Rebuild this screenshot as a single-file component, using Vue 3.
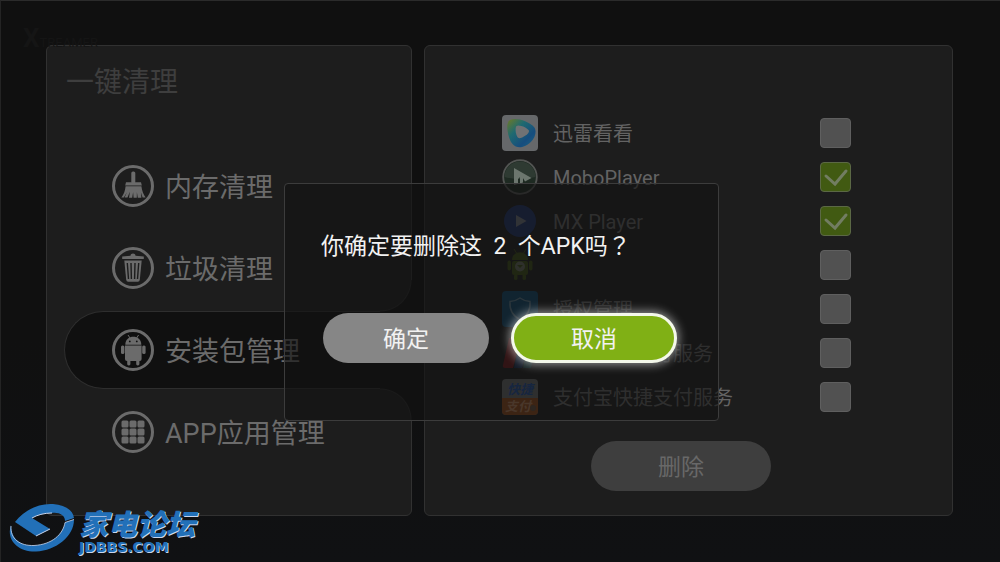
<script setup>
import { ref } from 'vue'

const menu = [
  { label: '内存清理', icon: 'broom' },
  { label: '垃圾清理', icon: 'trash' },
  { label: '安装包管理', icon: 'robot' },
  { label: 'APP应用管理', icon: 'grid' },
]
const current = ref(2)

const packages = ref([
  { name: '迅雷看看', icon: 'kankan', checked: false },
  { name: 'MoboPlayer', icon: 'mobo', checked: true },
  { name: 'MX Player', icon: 'mx', checked: true },
  { name: '', icon: 'android', checked: false },
  { name: '授权管理', icon: 'shield', checked: false },
  { name: '银联安全支付服务', icon: 'union', checked: false },
  { name: '支付宝快捷支付服务', icon: 'alipay', checked: false },
])
const cells = [9.5, 17.5, 25.5]
</script>

<template>
  <div class="screen">
    <main class="panels">
      <section class="panel side">
        <h1 class="title">一键清理</h1>
        <nav class="menu">
          <button
            v-for="(item, i) in menu"
            :key="item.label"
            type="button"
            class="menu-item"
            :class="{ active: i === current }"
            @click="current = i"
          >
            <svg class="menu-icon" viewBox="0 0 42 42" aria-hidden="true">
              <circle cx="21" cy="21" r="19.5" fill="none" stroke="currentColor" stroke-width="3" />
              <g v-if="item.icon === 'broom'" fill="currentColor">
                <rect x="19.3" y="6.5" width="4" height="12" rx="1.6" />
                <path d="M14 17.2h15l.8 3.2H13.2z" />
                <path d="M13.6 21.2h15.8c.6 4.6 2 8 4.2 11.4h-3l-1.7-5 .5 5.200h-3.600l-.9-5.500-.1 5.500h-3.200l-.5-5.500-.9 5.500H17l.9-6-2.400 5.800H12.600l2.200-5-3 4.900H9.400c2.400-3.200 3.700-6.700 4.200-11.300z" />
              </g>
              <g v-else-if="item.icon === 'trash'">
                <path d="M18.500 8.800c0-3 5-3 5 0l8.300.7v2.600H10.200V9.500z" fill="currentColor" />
                <path d="M12.300 13.500h17.400l-1.900 19.300q-.2 1.900-2 1.900h-9.600q-1.800 0-2-1.900z" fill="currentColor" />
                <path d="M15.300 16l1.200 16M19 16l.4 16M23 16l-.4 16M26.700 16l-1.200 16" fill="none" stroke="#1c1c1c" stroke-width="1.400" />
              </g>
              <g v-else-if="item.icon === 'robot'" fill="currentColor">
                <path d="M13.300 15.700c0-10.600 16-10.600 16 0z" />
                <path d="M16 6l2 3M26.600 6l-2 3" stroke="currentColor" stroke-width="1" />
                <circle cx="17.800" cy="12.400" r=".9" fill="#111" />
                <circle cx="24.800" cy="12.400" r=".9" fill="#111" />
                <path d="M13 16.600h16.600v13.400q0 2-2 2H15q-2 0-2-2z" />
                <rect x="9" y="16.500" width="3.400" height="8.500" rx="1.500" />
                <rect x="30.200" y="16.500" width="3.400" height="8.500" rx="1.500" />
                <rect x="15.200" y="30" width="3.200" height="6.500" rx="1.400" />
                <rect x="24.200" y="30" width="3.200" height="6.500" rx="1.400" />
              </g>
              <g v-else fill="currentColor">
                <template v-for="y in cells" :key="y">
                  <rect v-for="x in cells" :key="x" :x="x" :y="y" width="7" height="7" rx="1.500" />
                </template>
              </g>
            </svg>
            <span class="menu-label">{{ item.label }}</span>
          </button>
        </nav>
      </section>

      <section class="panel content">
        <ul class="list">
          <li v-for="(p, i) in packages" :key="p.icon" class="row">
            <svg class="app-icon" viewBox="0 0 36 36" aria-hidden="true">
              <g v-if="p.icon === 'kankan'">
                <defs>
                  <linearGradient id="kk" x1="0" y1="0" x2="1" y2="1">
                    <stop offset="0" stop-color="#6f7a25" />
                    <stop offset=".35" stop-color="#1f6a70" />
                    <stop offset=".7" stop-color="#164d7e" />
                    <stop offset="1" stop-color="#1b6482" />
                  </linearGradient>
                </defs>
                <rect width="36" height="36" rx="4" fill="#66686a" />
                <path d="M8 5C14 2 26 6 32 12c4 5 0 15-9 19-9 4-14-2-16-9C5 15 4 8 8 5z" fill="url(#kk)" />
                <path d="M14.500 11c2-2 12 2 12.500 5s-8 8-10.500 7-4-10-2-12z" fill="#707274" />
              </g>
              <g v-else-if="p.icon === 'mobo'">
                <circle cx="18" cy="18" r="16.800" fill="#1e2a22" stroke="#535553" stroke-width="1.800" />
                <path d="M2.500 18a15.500 15.500 0 0 1 31 0q-15 4-31 0z" fill="#2e3a32" />
                <path d="M12 9v17l4-1V20l2-2v6.500l3-1V19l2 3.500 6.500-3.500z" fill="#6c766e" />
              </g>
              <g v-else-if="p.icon === 'mx'">
                <circle cx="18" cy="18" r="16" fill="#1f3266" />
                <path d="M14 12l10.500 6L14 24z" fill="#6c7079" />
              </g>
              <g v-else-if="p.icon === 'android'" fill="#3a4a14">
                <path d="M10 13c0-10.500 16-10.500 16 0z" />
                <path d="M12 2l2.500 4M24 2l-2.500 4" stroke="#3a4a14" />
                <rect x="10" y="14" width="16" height="14" rx="2" />
                <rect x="5.500" y="13.500" width="3.500" height="10" rx="1.700" />
                <rect x="27" y="13.500" width="3.500" height="10" rx="1.700" />
                <rect x="12" y="27" width="3.500" height="6" rx="1.500" />
                <rect x="20.500" y="27" width="3.500" height="6" rx="1.500" />
                <circle cx="18" cy="19.500" r="5" fill="#62685a" />
                <path d="M15 18h6l-3 3z" fill="#3a4a14" />
              </g>
              <g v-else-if="p.icon === 'shield'">
                <rect width="36" height="36" rx="4" fill="#0f4567" />
                <path d="M18 7q5 3.500 10 3.500Q29 23 18 28.500 7 23 8 10.500 13 10.500 18 7z" fill="none" stroke="#587686" stroke-width="1.500" />
              </g>
              <g v-else-if="p.icon === 'union'">
                <path d="M7 3h12l-8 30H3q-3 0-2-3z" fill="#6b171c" />
                <path d="M18 3h10l-8 30H12z" fill="#142a4a" />
                <path d="M27 3h9l-7 30h-8z" fill="#12373a" />
              </g>
              <g v-else>
                <rect width="36" height="36" rx="4" fill="#626466" />
                <path d="M0 19h36v13q0 4-4 4H4q-4 0-4-4z" fill="#8a4519" />
                <text x="18" y="15" class="ico-text" fill="#1d4a94">快捷</text>
                <text x="16" y="32" class="ico-text" fill="#b07b58">支付</text>
                <circle cx="31" cy="29" r="3" fill="#5e4a3a" />
              </g>
            </svg>
            <label class="name" :for="'pkg-' + i">{{ p.name }}</label>
            <span class="tick">
              <input :id="'pkg-' + i" v-model="p.checked" type="checkbox" />
              <svg v-if="p.checked" viewBox="0 0 31 30" aria-hidden="true">
                <path d="M6 14l9 8L26 9" fill="none" stroke="#727d62" stroke-width="3" stroke-linecap="round" />
              </svg>
            </span>
          </li>
        </ul>
        <button type="button" class="pill remove">删除</button>
      </section>
    </main>

    <div class="ghost" aria-hidden="true"><b>X</b>TREAMER</div>

    <div class="overlay">
      <div class="dialog" role="dialog" aria-modal="true" aria-labelledby="ask">
        <p id="ask" class="question">你确定要删除这&nbsp; 2&nbsp; 个APK吗<span class="mark">？</span></p>
        <div class="actions">
          <button type="button" class="pill ok">确定</button>
          <button type="button" class="pill cancel">取消</button>
        </div>
      </div>
    </div>

    <div class="brand">
      <svg class="brand-mark" viewBox="0 0 66 50" aria-hidden="true">
        <path d="M2 22C-3 36 8 49 27 48.500c20-1 38-15 38-32l-9 3c-2 12-13 22-31 23C11 43 2 36 2 22z" fill="#2270b8" />
        <path d="M2 23C1 36 11 43 25 42.500c18-1 29-11 31-23l9-3" fill="none" stroke="#c9d6ee" stroke-width=".8" />
        <path d="M6 19C15 7 30 0 44 1c12 1 20 6 21 14l-9 3c0-6-6-9-13-8-8 0-15 2-20 5l18 11-14 7z" fill="#2270b8" />
        <path d="M43 10c-8 0-15 2-20 5M41 26l-14 7" fill="none" stroke="#c9d6ee" stroke-width="1" />
      </svg>
      <div class="brand-text">
        <span class="brand-cn">家电论坛</span>
        <span class="brand-en">JDBBS.COM</span>
      </div>
    </div>
  </div>
</template>

<style>
body {
  margin: 0;
  background: #101010;
}
</style>

<style scoped>
.screen {
  position: relative;
  box-sizing: border-box;
  min-height: 100vh;
  padding: 44px 47px 45px 45px;
  border-top: 1px solid #2b2b2b;
  border-left: 1px solid #242424;
  background: linear-gradient(#101010 60%, #101113);
  font-family: Roboto, "Noto Sans CJK SC", sans-serif;
  color: #6b6b6b;
}
button {
  margin: 0;
  padding: 0;
  border: 0;
  background: none;
  color: inherit;
  font: inherit;
}
.panels {
  display: grid;
  grid-template-columns: 366fr 529fr;
  gap: 12px;
}
.panel {
  box-sizing: border-box;
  min-width: 0;
  border: 1px solid #313131;
  border-radius: 6px;
  background: #1d1d1d;
}
.title {
  margin: 0;
  padding: 17px 0 0 19px;
  font-size: 28px;
  line-height: 40px;
  font-weight: 400;
  color: #3e3e3e;
}
.menu {
  display: flex;
  flex-direction: column;
  gap: 4px;
  padding: 44px 0 44px 17px;
}
.menu-item {
  position: relative;
  display: flex;
  align-items: center;
  gap: 11px;
  height: 78px;
  padding-left: 48px;
  font-size: 27px;
  white-space: nowrap;
}
.menu-label {
  padding-top: 4px;
  line-height: 32px;
}
.menu-icon {
  width: 42px;
  height: 42px;
  flex: none;
}
.active {
  margin-right: -1px;
  background: #101010;
  border: 1px solid #2e2e2e;
  border-right: 0;
  border-radius: 39px 0 0 39px;
  padding-left: 47px;
}
.active::before,
.active::after {
  content: "";
  position: absolute;
  right: 0;
  width: 32px;
  height: 32px;
}
.active::before {
  bottom: 100%;
  background: radial-gradient(circle at 0 0, transparent 30px, #292929 31px, #101010 32px);
}
.active::after {
  top: 100%;
  background: radial-gradient(circle at 0 100%, transparent 30px, #292929 31px, #101010 32px);
}
.content {
  padding: 65px 101px 24px 77px;
}
.list {
  margin: 0;
  padding: 0;
  list-style: none;
}
.row {
  display: flex;
  align-items: center;
  height: 44px;
}
.app-icon {
  width: 36px;
  height: 36px;
  flex: none;
}
.ico-text {
  font-size: 13px;
  font-weight: 700;
  font-style: italic;
  text-anchor: middle;
}
.name {
  flex: 1;
  margin-left: 15px;
  padding-top: 2px;
  font-size: 20px;
  line-height: 26px;
  white-space: nowrap;
  color: #636363;
}
.tick {
  position: relative;
  width: 31px;
  height: 30px;
}
.tick input {
  appearance: none;
  display: block;
  box-sizing: border-box;
  width: 100%;
  height: 100%;
  margin: 0;
  border: 1px solid #5f5f5f;
  border-radius: 4px;
  background: #515151;
}
.tick input:checked {
  border-color: #5b6845;
  background: #415a12;
}
.tick svg {
  position: absolute;
  inset: 0;
  pointer-events: none;
}
.pill {
  height: 50px;
  padding-top: 4px;
  border-radius: 25px;
  font-size: 23px;
  line-height: 26px;
}
.remove {
  display: block;
  width: 180px;
  margin: 22px 0 0 89px;
  background: #3e3e3e;
  color: #686868;
}
.ghost {
  position: absolute;
  top: 22px;
  left: 22px;
  font-size: 13px;
  color: #151515;
}
.ghost b {
  font-size: 26px;
}
.overlay {
  position: absolute;
  inset: 0;
  display: flex;
  justify-content: center;
  align-items: flex-start;
  padding: 182px 0 0 2px;
}
.dialog {
  box-sizing: border-box;
  width: 435px;
  padding: 45px 41px 57px 38px;
  border: 1px solid #3c3c3c;
  border-radius: 4px;
  background: rgba(18, 18, 18, 0.65);
  color: #f2f2f2;
}
.question {
  margin: 0 0 48px -2px;
  font-size: 23px;
  line-height: 36px;
  white-space: nowrap;
}
.mark {
  font-family: "Noto Sans CJK TC", sans-serif;
  line-height: 1;
}
.actions {
  display: grid;
  grid-template-columns: 1fr 1fr;
  gap: 22px;
}
.ok {
  background: #868686;
}
.cancel {
  border: 3px solid #f4f8ea;
  background: #80b015;
  box-shadow: 0 0 10px 2px rgba(255, 255, 255, 0.5);
}
.brand {
  position: absolute;
  left: 8px;
  bottom: 9px;
  display: flex;
  align-items: flex-end;
  gap: 4px;
  color: #2270b8;
}
.brand-mark {
  width: 66px;
  height: 50px;
}
.brand-text {
  display: flex;
  flex-direction: column;
  text-shadow: 1px 1px 0 #c9d6ee;
}
.brand-cn {
  font-size: 29px;
  line-height: 32px;
  font-weight: 900;
  font-style: italic;
}
.brand-en {
  font-family: "DejaVu Sans", sans-serif;
  font-size: 14px;
  line-height: 12px;
  font-weight: 700;
}
</style>
